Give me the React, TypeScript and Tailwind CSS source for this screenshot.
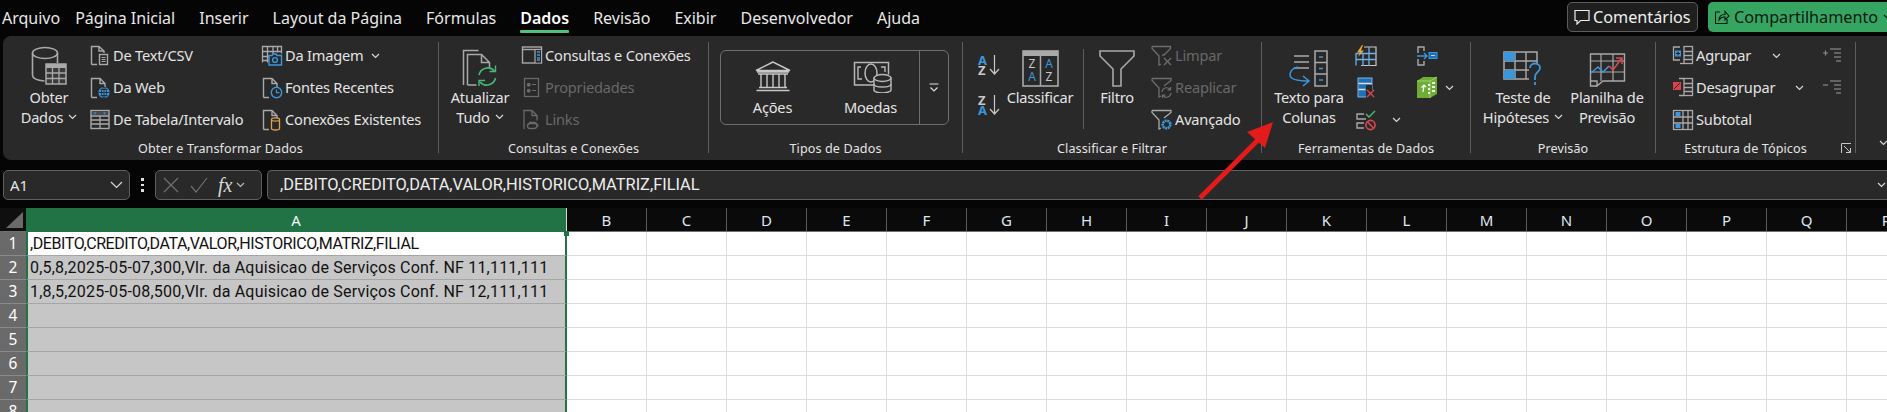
import React from "react";

const G = "#a9a9a9";
const B = "#3b97dc";
const F = "font-['Noto_Sans','Open_Sans',sans-serif]";

function Chev({ c = "#d8d8d8", big }: { c?: string; big?: boolean }) {
  return big ? (
    <svg width="13" height="8" viewBox="0 0 13 8" className="shrink-0">
      <path d="M1 1l5.500 5.500L12 1" fill="none" stroke={c} strokeWidth="1.200" />
    </svg>
  ) : (
    <svg width="9" height="6" viewBox="0 0 9 6" className="shrink-0">
      <path d="M1 1l3.500 3.500L8 1" fill="none" stroke={c} strokeWidth="1.200" />
    </svg>
  );
}

function Doc({ c = G, children }: { c?: string; children?: React.ReactNode }) {
  return (
    <svg width="22" height="22" viewBox="0 0 22 22">
      <path d="M2.500 20.500V1.500H11l5 5v4M11 1.500v5h5M2.500 20.500H8" fill="none" stroke={c} strokeWidth="1.400" />
      {children}
    </svg>
  );
}

const icons: Record<string, React.ReactNode> = {
  csv: (
    <svg width="22" height="22" viewBox="0 0 22 22">
      <path d="M2.500 19.500V1.500H10l5 4.500v2M10 1.500v4.500h5M2.500 19.500H8" fill="none" stroke={G} strokeWidth="1.400" />
      <rect x="10.500" y="9.500" width="8" height="10" fill="none" stroke={G} strokeWidth="1.400" />
      <path d="M12.500 12.500h4M12.500 14.500h4M12.500 16.500h4" stroke={G} />
    </svg>
  ),
  web: (
    <Doc>
      <circle cx="15" cy="15.500" r="5.600" fill={B} />
      <path d="M9.500 15.500h11M15 10v11M11.500 12.500h7M11.500 18.500h7" stroke="#292929" strokeWidth="0.900" />
      <ellipse cx="15" cy="15.500" rx="2.600" ry="5.500" fill="none" stroke="#292929" strokeWidth="0.900" />
    </Doc>
  ),
  table: (
    <svg width="22" height="22" viewBox="0 0 22 22">
      <rect x="2" y="1.500" width="18" height="18" fill="none" stroke={G} strokeWidth="1.400" />
      <rect x="3" y="2.500" width="16" height="3.500" fill="#4a4a4a" />
      <path d="M4.500 3.500h3l-1.500 2zM14 3.500h3l-1.500 2z" fill={B} />
      <path d="M2 7h18M2 11h18M2 15h18M11 7v12" stroke={G} strokeWidth="1.300" />
    </svg>
  ),
  image: (
    <svg width="22" height="22" viewBox="0 0 22 22">
      <path d="M1.500 17.500V1.500h19v7M1.500 6.500h19M1.500 11.500h8M1.500 15.500h6M6.500 1.500v16M12 1.500v8M16.500 1.500v6" fill="none" stroke={G} strokeWidth="1.300" />
      <path d="M8 10.500h3l1-1.500h3l1 1.500h4.500v9.500H8z" fill="#292929" stroke={B} strokeWidth="1.400" />
      <circle cx="14" cy="15" r="2.400" fill="none" stroke={B} strokeWidth="1.400" />
    </svg>
  ),
  recent: (
    <Doc>
      <circle cx="15.500" cy="15.500" r="5.200" fill="#292929" stroke={B} strokeWidth="1.400" />
      <path d="M15.500 12.500v3.200h3" fill="none" stroke={B} strokeWidth="1.200" />
    </Doc>
  ),
  conn: (
    <Doc>
      <path d="M10.500 10.500v9c0 1 2 1.500 4 1.500s4-.5 4-1.500v-9" fill="#292929" stroke="#e0a24a" strokeWidth="1.300" />
      <ellipse cx="14.500" cy="10.500" rx="4" ry="1.600" fill="#292929" stroke="#e0a24a" strokeWidth="1.300" />
    </Doc>
  ),
  queries: (
    <svg width="22" height="22" viewBox="0 0 22 22">
      <rect x="1.500" y="2" width="19" height="16" fill="none" stroke={G} strokeWidth="1.400" />
      <path d="M1.500 4.500h19" stroke={G} strokeWidth="1.400" />
      <rect x="14" y="5" width="6" height="12.500" fill="#292929" />
      <path d="M14 5v13" stroke={G} strokeWidth="1.200" />
      <path d="M16 7h3M16 10h3M16 13h3M16 15h3" stroke={B} strokeWidth="1.400" />
    </svg>
  ),
  props: (
    <svg width="22" height="22" viewBox="0 0 22 22">
      <rect x="3.500" y="1.500" width="14" height="18" fill="none" stroke="#6a6a6a" strokeWidth="1.300" />
      <path d="M6.500 6.500h2.500v2.500H6.500zM6.500 12.500h2.500V15H6.500zM11 7.500h4M11 13.500h4" fill="#6a6a6a" stroke="#6a6a6a" />
    </svg>
  ),
  links: (
    <svg width="22" height="22" viewBox="0 0 22 22">
      <path d="M3 20V1.500h8l5 5v5M11 1.500v5h5" fill="none" stroke="#6a6a6a" strokeWidth="1.300" />
      <path d="M8 13.500h5a3 3 0 010 6H9a2.500 2.500 0 010-5h5a3 3 0 013 3" fill="none" stroke="#6a6a6a" strokeWidth="1.300" />
    </svg>
  ),
  limpar: (
    <svg width="22" height="22" viewBox="0 0 22 22">
      <path d="M1 1.500h18.500v2L13 10h-2M1 1.500v2L8 11v9l2-1" fill="none" stroke="#6e6e6e" strokeWidth="1.300" />
      <path d="M13 13l7 7M20 13l-7 7" stroke="#6e6e6e" strokeWidth="1.300" />
    </svg>
  ),
  reaplicar: (
    <svg width="22" height="22" viewBox="0 0 22 22">
      <path d="M1 1.500h19v2L13 9M1 1.500v2L8 11v9l2-1" fill="none" stroke="#6e6e6e" strokeWidth="1.300" />
      <path d="M11 15a4.500 4.500 0 018-2.500M20 16a4.500 4.500 0 01-8 2.500M19.500 10v3h-3M11.500 21v-3h3" fill="none" stroke="#6e6e6e" strokeWidth="1.200" />
    </svg>
  ),
  avancado: (
    <svg width="22" height="22" viewBox="0 0 22 22">
      <path d="M1 1.500h19v2L13 9M1 1.500v2L8 11v9l2-1" fill="none" stroke={G} strokeWidth="1.300" />
      <circle cx="15.500" cy="15.500" r="3.800" fill="none" stroke={B} strokeWidth="2.600" strokeDasharray="2 .6" />
      <circle cx="15.500" cy="15.500" r="1.300" fill="#292929" />
    </svg>
  ),
  agrupar: (
    <svg width="22" height="22" viewBox="0 0 22 22">
      <path d="M8 2H1.500v13H8" fill="none" stroke={G} strokeWidth="1.300" />
      <rect x="3" y="5.500" width="6" height="6" fill={B} />
      <path d="M4 8.500h4M6 6.500v4" stroke="#1a1a1a" />
      <rect x="12" y="1.500" width="8.500" height="17" fill="none" stroke={G} strokeWidth="1.300" />
      <path d="M12 6.500h8.500M12 10.500h8.500M12 14.500h8.500" stroke={G} strokeWidth="1.300" />
      <path d="M8 18.500h4" stroke={G} strokeWidth="1.300" />
    </svg>
  ),
  desagrupar: (
    <svg width="22" height="22" viewBox="0 0 22 22">
      <rect x="1" y="5" width="8" height="8" fill="#d8444a" />
      <path d="M2 12l6-6" stroke="#292929" />
      <rect x="12" y="1.500" width="8.500" height="17" fill="none" stroke={G} strokeWidth="1.300" />
      <path d="M12 6.500h8.500M12 10.500h8.500M12 14.500h8.500M7 1.500h5M7 18.500h5" stroke={G} strokeWidth="1.300" />
    </svg>
  ),
  subtotal: (
    <svg width="22" height="22" viewBox="0 0 22 22">
      <rect x="1.500" y="1.500" width="19" height="19" fill="none" stroke={G} strokeWidth="1.300" />
      <path d="M11 1.500v19M16 1.500v19M1.500 8h19M1.500 14h19" stroke={G} strokeWidth="1.300" />
      <rect x="3.500" y="3" width="5" height="4" fill={B} />
      <rect x="3.500" y="15" width="5" height="4" fill={B} />
    </svg>
  ),
  flash: (
    <svg width="22" height="22" viewBox="0 0 22 22">
      <path d="M6 20.500h15V2H9" fill="none" stroke="#c9c9c9" strokeWidth="1.200" />
      <path d="M1 8.500h20M1 14.500h20M1 20.500V8M8 8v13M14 2v19" stroke="#6eb0e6" strokeWidth="1.300" />
      <path d="M7 0L2 7.500h3L3 12l6-6.500H6L8 0z" fill="#e8a93a" />
    </svg>
  ),
  dup: (
    <svg width="22" height="22" viewBox="0 0 22 22">
      <rect x="3" y="1" width="14" height="19" fill="#1f6fb8" stroke="#7ab3e2" />
      <path d="M3.500 6.500h13M3.500 12.500h7" stroke="#ddd" strokeWidth="1.600" />
      <rect x="11" y="8" width="6" height="5" fill="#292929" />
      <rect x="11" y="13" width="10" height="8" fill="#292929" />
      <path d="M12 13l7 7M19 13l-7 7" stroke="#d9484c" strokeWidth="1.400" />
    </svg>
  ),
  valid: (
    <svg width="22" height="22" viewBox="0 0 22 22">
      <path d="M9 5H2v5h9M9 14H2v5h7" fill="none" stroke={G} strokeWidth="1.400" />
      <path d="M11 5l3 3 6-6" fill="none" stroke="#50b878" strokeWidth="1.400" />
      <circle cx="15.500" cy="16" r="4.600" fill="none" stroke="#d9484c" strokeWidth="1.600" />
      <path d="M12.500 13l6 6" stroke="#d9484c" strokeWidth="1.600" />
    </svg>
  ),
  consol: (
    <svg width="22" height="22" viewBox="0 0 22 22">
      <path d="M8 6V2H2v6M8 16v4H2v-6" fill="none" stroke={G} strokeWidth="1.400" />
      <path d="M1 11h10M8 8l3 3-3 3" fill="none" stroke={B} strokeWidth="1.300" />
      <rect x="13" y="7.500" width="8" height="6" fill="#1f6fb8" stroke={B} />
      <path d="M15 10.500h4" stroke="#ccc" />
    </svg>
  ),
  model: (
    <svg width="22" height="24" viewBox="0 0 22 24">
      <path d="M1 5l6-4h14v17l-7 4H1z" fill="#6fae36" />
      <path d="M1 5h13v17" fill="none" stroke="#9ed268" />
      <path d="M14 5l7-4" stroke="#9ed268" />
      <path d="M7 16l1-7M5.500 11.500L8 9l2 2" fill="none" stroke="#fff" strokeWidth="1.200" />
      <path d="M12 9h2M12 13h2M12 17h2M16 7h3M16 11h3M16 15h3" stroke="#eee" strokeWidth="2" />
    </svg>
  ),
  plus: (
    <svg width="20" height="16" viewBox="0 0 20 16">
      <path d="M1 5h5M3.500 2.500v5" stroke="#8a8a8a" strokeWidth="1.200" />
      <path d="M8 1h11M12 5h7M12 9h7M14 13h5" stroke="#777" strokeWidth="1.300" />
    </svg>
  ),
  minus: (
    <svg width="20" height="16" viewBox="0 0 20 16">
      <path d="M1 5h5" stroke="#8a8a8a" strokeWidth="1.200" />
      <path d="M8 1h11M12 5h7M12 9h7M14 13h5" stroke="#777" strokeWidth="1.300" />
    </svg>
  ),
};

function Small({
  icon,
  label,
  off,
  chev,
  chevGap = "ml-2",
}: {
  icon: string;
  label: string;
  off?: boolean;
  chev?: boolean;
  chevGap?: string;
}) {
  return (
    <div className="h-[32px] flex items-center">
      <div className="w-[24px] h-[22px] flex items-center justify-center shrink-0">{icons[icon]}</div>
      <span className={`ml-[1px] whitespace-nowrap text-[14.6px] tracking-[-0.2px] ${off ? "text-[#686868]" : "text-[#e4e4e4]"}`}>
        {label}
      </span>
      {chev && (
        <span className={chevGap}>
          <Chev />
        </span>
      )}
    </div>
  );
}

function Big({
  icon,
  lines,
  chev,
  className = "",
}: {
  icon: React.ReactNode;
  lines: string[];
  chev?: boolean;
  className?: string;
}) {
  return (
    <div className={`flex flex-col items-center shrink-0 ${className}`}>
      <div className="h-[47px] flex items-end justify-center">{icon}</div>
      {lines.map((l, i) => (
        <div key={i} className="h-[20px] leading-[20px] flex items-center whitespace-nowrap text-[14.6px] tracking-[-0.2px] text-[#e4e4e4]">
          {l}
          {chev && i === lines.length - 1 && (
            <span className="ml-[5px]">
              <Chev />
            </span>
          )}
        </div>
      ))}
    </div>
  );
}

function Group({
  w,
  label,
  children,
  launcher,
}: {
  w: string;
  label: string;
  children: React.ReactNode;
  launcher?: boolean;
}) {
  return (
    <div className={`${w} shrink-0 flex`}>
      <div className="flex-1 min-w-0 flex flex-col pt-[4px]">
        <div className="h-[97px] flex">{children}</div>
        <div className={`relative h-[22px] leading-[24px] text-center text-[12.6px] tracking-[0.1px] text-[#e4e4e4] whitespace-nowrap ${launcher ? "pr-[20px]" : ""}`}>
          {label}
          {launcher && (
            <svg width="11" height="11" viewBox="0 0 11 11" className="absolute right-[3px] top-[6px]">
              <path d="M.5 10V.5H10M3 3l6.500 6.500M5 9.500h4.500V5" fill="none" stroke="#c8c8c8" />
            </svg>
          )}
        </div>
      </div>
      <div className="w-[1px] my-[6px] mb-[7px] bg-[#5d5d5d]" />
    </div>
  );
}

function SortAZ({ flip }: { flip?: boolean }) {
  const top = flip ? "Z" : "A";
  const bot = flip ? "A" : "Z";
  return (
    <div className="w-[22px] h-[22px] flex">
      <div className="flex flex-col text-[13px] leading-[10px] font-bold pt-[1px]">
        <span className={flip ? "text-[#c8c8c8]" : "text-[#3b97dc]"}>{top}</span>
        <span className={flip ? "text-[#3b97dc]" : "text-[#c8c8c8]"}>{bot}</span>
      </div>
      <svg width="11" height="22" viewBox="0 0 11 22" className="ml-[2px]">
        <path d="M5.500 1v19M1 15l4.500 5 4.500-5" fill="none" stroke="#c8c8c8" strokeWidth="1.200" />
      </svg>
    </div>
  );
}

const cols = ["B", "C", "D", "E", "F", "G", "H", "I", "J", "K", "L", "M", "N", "O", "P", "Q", "R"];
const cells = [
  ",DEBITO,CREDITO,DATA,VALOR,HISTORICO,MATRIZ,FILIAL",
  "0,5,8,2025-05-07,300,Vlr. da Aquisicao de Serviços Conf. NF 11,111,111",
  "1,8,5,2025-05-08,500,Vlr. da Aquisicao de Serviços Conf. NF 12,111,111",
  "",
  "",
  "",
  "",
  "",
];

export default function App() {
  return (
    <div className={`relative w-[1887px] h-[412px] overflow-hidden bg-[#050505] text-[#e4e4e4] ${F}`}>
      {/* tabs */}
      <div className="h-[36px] flex items-start">
        <div className="flex gap-[24px] pl-[2px] text-[16px] leading-[36px] text-[#e8e8e8]">
          <span className="mr-[-9px]">Arquivo</span>
          {["Página Inicial", "Inserir", "Layout da Página", "Fórmulas"].map((t) => (
            <span key={t}>{t}</span>
          ))}
          <span className="relative font-semibold text-white">
            Dados
            <span className="absolute left-0 right-0 top-[30px] h-[3px] rounded-[1px] bg-[#4fc27f]" />
          </span>
          {["Revisão", "Exibir", "Desenvolvedor", "Ajuda"].map((t) => (
            <span key={t}>{t}</span>
          ))}
        </div>
        <div className="ml-auto mt-[2px] flex gap-[10px]">
          <div className="w-[131px] h-[30px] rounded-[5px] border border-[#5c5c5c] bg-[#1f1f1f] flex items-center pl-[6px] gap-[3px] text-[16.2px] text-[#f0f0f0]">
            <svg width="16" height="16" viewBox="0 0 16 16">
              <path d="M1 1.500h14v10H6.500L3 15v-3.500H1z" fill="none" stroke="#eee" strokeWidth="1.200" />
            </svg>
            Comentários
          </div>
          <div className="w-[179px] h-[30px] rounded-l-[5px] bg-[#37a562] flex items-center pl-[6px] gap-[4px] text-[16.2px] text-[#0c1a12] whitespace-nowrap overflow-hidden">
            <svg width="16" height="16" viewBox="0 0 16 16" className="shrink-0">
              <path d="M6 3H1.500v11.500h11.500V10M5 11c0-4 3-5.500 6-5.500V2.500l4 4.500-4 4V8c-2.500-.2-4.500.5-6 3z" fill="none" stroke="#0c1a12" strokeWidth="1.100" />
            </svg>
            Compartilhamento
            <span className="ml-[1px]">
              <Chev c="#0c1a12" />
            </span>
          </div>
        </div>
      </div>

      {/* ribbon */}
      <div className="ml-[3px] h-[124px] rounded-l-[8px] bg-[#292929] flex">
        <Group w="w-[436px]" label="Obter e Transformar Dados">
          <Big
            className="w-[78px] ml-[7px]"
            chev
            lines={["Obter", "Dados"]}
            icon={
              <svg width="36" height="41" viewBox="0 0 36 41">
                <ellipse cx="14" cy="7" rx="12.500" ry="5.500" fill="none" stroke={G} strokeWidth="1.600" />
                <path d="M1.500 7v22c0 3.500 6 5.500 12 6M26.500 7v10" fill="none" stroke={G} strokeWidth="1.600" />
                <rect x="15" y="18" width="20" height="20" fill="#3a3a3a" stroke={G} strokeWidth="1.500" />
                <rect x="15" y="18" width="20" height="4" fill={G} />
                <path d="M15 27h20M15 32.500h20M21.500 22v16M28 22v16" stroke={G} strokeWidth="1.300" />
              </svg>
            }
          />
          <div className="flex flex-col w-[172px]">
            <Small icon="csv" label="De Text/CSV" />
            <Small icon="web" label="Da Web" />
            <Small icon="table" label="De Tabela/Intervalo" />
          </div>
          <div className="flex flex-col">
            <Small icon="image" label="Da Imagem" chev />
            <Small icon="recent" label="Fontes Recentes" />
            <Small icon="conn" label="Conexões Existentes" />
          </div>
        </Group>

        <Group w="w-[270px]" label="Consultas e Conexões">
          <Big
            className="w-[72px] ml-[5px] mr-[4px]"
            chev
            lines={["Atualizar", "Tudo"]}
            icon={
              <svg width="36" height="38" viewBox="0 0 36 38">
                <path d="M1.500 36V1.500h15" fill="none" stroke={G} strokeWidth="1.500" />
                <path d="M5.500 36V5.500h14l8 8v5M19.500 5.500v8h8M5.500 36h9" fill="none" stroke={G} strokeWidth="1.500" />
                <path d="M17 26a9 9 0 0115.500-4M33.500 29a9 9 0 01-15.500 4" fill="none" stroke="#46b97a" strokeWidth="1.600" />
                <path d="M33.500 16.500v6h-6M17 37v-5.500h6" fill="none" stroke="#46b97a" strokeWidth="1.400" />
              </svg>
            }
          />
          <div className="flex flex-col">
            <Small icon="queries" label="Consultas e Conexões" />
            <Small icon="props" label="Propriedades" off />
            <Small icon="links" label="Links" off />
          </div>
        </Group>

        <Group w="w-[254px]" label="Tipos de Dados">
          <div className="mt-[10px] ml-[11px] w-[229px] h-[75px] rounded-[6px] border border-[#6f6f6f] flex">
            <div className="w-[99px] flex flex-col items-center ml-[2px]">
              <svg width="36" height="32" viewBox="0 0 36 32" className="mt-[10px]">
                <path d="M18 1L1 9.500h34zM2 11h32M6 13v13M12 13v13M18 13v13M24 13v13M30 13v13M3 13h30M4 26.500h28M1.500 29.500h33" fill="none" stroke="#c8c8c8" strokeWidth="1.400" />
              </svg>
              <span className="mt-[4px] text-[14.6px] tracking-[-0.2px] leading-[20px]">Ações</span>
            </div>
            <div className="w-[97px] flex flex-col items-center">
              <svg width="40" height="32" viewBox="0 0 40 32" className="mt-[10px] ml-[5px]">
                <path d="M26 24H1.500V1.500h34v12" fill="none" stroke="#b8b8b8" strokeWidth="1.500" />
                <path d="M8 6H5v12h4M28 6h4v5" fill="none" stroke="#b8b8b8" strokeWidth="1.400" />
                <ellipse cx="18" cy="12" rx="6" ry="9" fill="none" stroke="#b8b8b8" strokeWidth="1.500" />
                <path d="M21 17v12c0 2 5 3 8 3s9-1 9-3V17z" fill="#292929" stroke="#b8b8b8" strokeWidth="1.400" />
                <ellipse cx="29.500" cy="17" rx="8.500" ry="3.500" fill="#292929" stroke="#b8b8b8" strokeWidth="1.400" />
                <path d="M21 23c0 2 4 3 8.500 3s8.500-1 8.500-3" fill="none" stroke="#b8b8b8" strokeWidth="1.400" />
              </svg>
              <span className="mt-[4px] text-[14.6px] tracking-[-0.2px] leading-[20px]">Moedas</span>
            </div>
            <div className="flex-1 border-l border-[#6f6f6f] flex items-center justify-center">
              <svg width="10" height="10" viewBox="0 0 10 10">
                <path d="M.5 1h9M1.500 4.500L5 8l3.500-3.500" fill="none" stroke="#e0e0e0" strokeWidth="1.100" />
              </svg>
            </div>
          </div>
        </Group>

        <Group w="w-[299px]" label="Classificar e Filtrar">
          <div className="ml-[15px] w-[24px] flex flex-col gap-[18px] pt-[14px]">
            <SortAZ />
            <SortAZ flip />
          </div>
          <Big
            className="w-[74px] ml-[1px]"
            lines={["Classificar"]}
            icon={
              <svg width="37" height="37" viewBox="0 0 37 37">
                <rect x="1" y="1" width="35" height="35" fill="none" stroke={G} strokeWidth="1.600" />
                <rect x="1" y="1" width="35" height="5" fill={G} />
                <path d="M18.500 6v30" stroke={G} strokeWidth="1.500" />
                <text x="10" y="18" textAnchor="middle" fontSize="12" fill="#c8c8c8">Z</text>
                <text x="10" y="31" textAnchor="middle" fontSize="12" fill={B}>A</text>
                <text x="27" y="18" textAnchor="middle" fontSize="12" fill={B}>A</text>
                <text x="27" y="31" textAnchor="middle" fontSize="12" fill="#c8c8c8">Z</text>
              </svg>
            }
          />
          <div className="ml-[6px] mt-[9px] mb-[8px] w-[1px] bg-[#5d5d5d]" />
          <Big
            className="w-[52px] ml-[7px] mr-[7px]"
            lines={["Filtro"]}
            icon={
              <svg width="36" height="37" viewBox="0 0 36 37">
                <path d="M1 1h34v5L22 19v17h-8V19L1 6z" fill="none" stroke={G} strokeWidth="1.600" />
              </svg>
            }
          />
          <div className="flex flex-col">
            <Small icon="limpar" label="Limpar" off />
            <Small icon="reaplicar" label="Reaplicar" off />
            <Small icon="avancado" label="Avançado" />
          </div>
        </Group>

        <Group w="w-[209px]" label="Ferramentas de Dados">
          <Big
            className="w-[72px] ml-[11px] mr-[9px]"
            lines={["Texto para", "Colunas"]}
            icon={
              <svg width="40" height="37" viewBox="0 0 40 37">
                <path d="M5 6h15M5 12h15M5 18h15" stroke={G} strokeWidth="1.500" />
                <rect x="26" y="1" width="12" height="35" fill="none" stroke={G} strokeWidth="1.500" />
                <path d="M26 12.500h12M26 24h12" stroke={G} strokeWidth="1.500" />
                <path d="M30 7h4M30 18.500h4M30 30h4" stroke={B} strokeWidth="1.500" />
                <path d="M9 17C3 18 1 22 1 25c0 4 5 6 19 6M14 26l6 5-6 5" fill="none" stroke={B} strokeWidth="1.500" />
              </svg>
            }
          />
          <div className="flex flex-col w-[62px]">
            <div className="h-[32px] pl-[1px] flex items-center">{icons.flash}</div>
            <div className="h-[32px] pl-[1px] flex items-center">{icons.dup}</div>
            <div className="h-[32px] pl-[1px] flex items-center gap-[15px]">
              {icons.valid}
              <Chev />
            </div>
          </div>
          <div className="flex flex-col">
            <div className="h-[32px] flex items-center">{icons.consol}</div>
            <div className="h-[32px] flex items-center gap-[7px]">
              {icons.model}
              <Chev />
            </div>
          </div>
        </Group>

        <Group w="w-[185px]" label="Previsão">
          <Big
            className="w-[86px] ml-[9px]"
            chev
            lines={["Teste de", "Hipóteses"]}
            icon={
              <svg width="40" height="36" viewBox="0 0 40 36">
                <rect x="1" y="1" width="33" height="27" fill="none" stroke={G} strokeWidth="1.500" />
                <path d="M1 10h33M1 19h33M12 1v27M23 1v27" stroke={G} strokeWidth="1.400" />
                <rect x="1" y="1" width="11" height="9" fill="#3b97dc" />
                <rect x="1" y="19" width="11" height="9" fill="#3b97dc" />
                <rect x="26" y="12" width="14" height="24" fill="#292929" />
                <path d="M27 17c0-6 10-6 10 0 0 4-5 4-5 9v3M32 31v3" fill="none" stroke={B} strokeWidth="1.800" />
              </svg>
            }
          />
          <div className="w-[86px] ml-[-2px]">
            <Big
              lines={["Planilha de", "Previsão"]}
              icon={
                <svg width="37" height="34" viewBox="0 0 37 34">
                  <path d="M8 33H1.500V1h34v27H14l-6 5V28H1.500" fill="none" stroke={G} strokeWidth="1.400" />
                  <path d="M1.500 8h34M1.500 19h34M12 1v27M24 1v27" stroke={G} strokeWidth="1.200" />
                  <path d="M2 20l7-6 5 5 6-6" fill="none" stroke={B} strokeWidth="1.600" />
                  <path d="M20 13l4 4 8-11M27 5h6v6" fill="none" stroke="#d9484c" strokeWidth="1.600" />
                </svg>
              }
            />
          </div>
        </Group>

        <Group w="w-[200px]" label="Estrutura de Tópicos" launcher>
          <div className="flex flex-col ml-[15px] w-[150px] shrink-0">
            <Small icon="agrupar" label="Agrupar" chev chevGap="ml-[21px]" />
            <Small icon="desagrupar" label="Desagrupar" chev chevGap="ml-[20px]" />
            <Small icon="subtotal" label="Subtotal" />
          </div>
          <div className="flex flex-col pl-[1px]">
            <div className="h-[32px] flex items-center">{icons.plus}</div>
            <div className="h-[32px] flex items-center">{icons.minus}</div>
          </div>
        </Group>

        <div className="flex-1 flex items-end pb-[14px] pl-[23px]">
          <Chev />
        </div>
      </div>

      {/* formula bar */}
      <div className="h-[30px] mt-[10px] flex items-stretch">
        <div className="ml-[3px] w-[127px] rounded-[5px] border border-[#5f5f5f] bg-[#292929] flex items-center justify-between pl-[6px] pr-[6px] text-[15px]">
          A1
          <Chev big />
        </div>
        <div className="w-[25px] flex flex-col items-center justify-center gap-[3px]">
          <span className="w-[2.500px] h-[2.500px] bg-[#e0e0e0]" />
          <span className="w-[2.500px] h-[2.500px] bg-[#e0e0e0]" />
          <span className="w-[2.500px] h-[2.500px] bg-[#e0e0e0]" />
        </div>
        <div className="w-[107px] rounded-[5px] border border-[#5f5f5f] bg-[#292929] flex items-center pl-[7px]">
          <svg width="16" height="16" viewBox="0 0 16 16">
            <path d="M1 1l14 14M15 1L1 15" stroke="#707070" strokeWidth="1.200" />
          </svg>
          <svg width="18" height="16" viewBox="0 0 18 16" className="ml-[11px]">
            <path d="M1 9l5 6L17 1" fill="none" stroke="#707070" strokeWidth="1.200" />
          </svg>
          <span className="ml-[10px] font-['Liberation_Serif',serif] italic text-[20px] leading-none text-[#d8d8d8]">fx</span>
          <span className="ml-[4px]">
            <Chev c="#b8b8b8" />
          </span>
        </div>
        <div className="ml-[5px] flex-1 rounded-l-[5px] border-y border-l border-[#5f5f5f] bg-[#292929] flex items-center pl-[12px] pr-[1px] justify-between font-['Roboto',sans-serif] text-[16.4px] text-[#ededed]">
          {cells[0]}
          <Chev />
        </div>
      </div>

      {/* sheet */}
      <div className="mt-[8px] grid grid-cols-[26px_541px_repeat(17,80px)] auto-rows-[24px] font-['Roboto',sans-serif]">
        <div className="bg-[#0f0f0f] border-b border-[#707070] flex items-end justify-end pr-[3px] pb-[3px]">
          <div className="w-0 h-0 border-l-[17px] border-l-transparent border-b-[16px] border-b-[#6a6a6a]" />
        </div>
        <div className="bg-[#217346] text-[#f4f4f4] text-center leading-[24px] text-[15px] font-['Noto_Sans',sans-serif] border-r border-[#dadada]">A</div>
        {cols.map((c) => (
          <div key={c} className="bg-[#0a0a0a] text-[#dfe6ee] text-center leading-[24px] text-[15px] font-['Noto_Sans',sans-serif] border-b border-[#707070] border-r border-r-[#5a5a5a]">
            {c}
          </div>
        ))}
        {cells.map((c, i) => (
          <React.Fragment key={i}>
            <div className="bg-[#6a6a6a] border-b border-[#8a8a8a] text-center text-[15.5px] leading-[23px] text-white font-['Noto_Sans',sans-serif]">{i + 1}</div>
            <div
              className={`relative border-x-2 border-l-[#217346] border-r-[#217346] border-b border-b-[#a6a6a6] whitespace-nowrap pl-[2px] text-[16px] leading-[24px] text-[#111] ${
                i === 0 ? "bg-white tracking-[-0.42px]" : "bg-[#c6c6c6] tracking-[0.2px]"
              }`}
            >
              {c}
              {i === 0 && <span className="absolute right-[-4px] top-[-1px] w-[5px] h-[5px] bg-[#217346]" />}
            </div>
            {cols.map((k) => (
              <div key={k} className="bg-white border-r border-b border-[#dcdcdc]" />
            ))}
          </React.Fragment>
        ))}
      </div>

      {/* annotation arrow */}
      <svg width="100" height="100" viewBox="0 0 100 100" className="absolute left-[1190px] top-[110px]">
        <path d="M10 88L68 30" stroke="#e31b1b" strokeWidth="5" />
        <path d="M83 12L57 22 75 38z" fill="#e31b1b" />
      </svg>
    </div>
  );
}
